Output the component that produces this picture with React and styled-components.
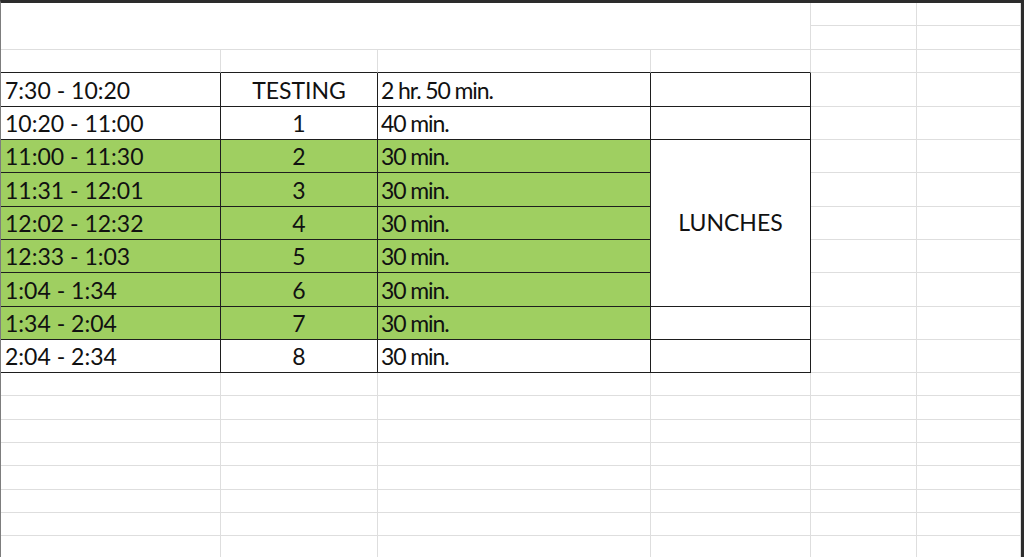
import React from "react";
import styled, { createGlobalStyle } from "styled-components";

const Global = createGlobalStyle`
  html, body { margin: 0; padding: 0; background: #ffffff; overflow: hidden; }
  body { font-family: Lato, "Open Sans", sans-serif; }
`;

const LIGHT = "#dedede";
const DARK = "#1e1e1e";
const GREEN = "#9fcf61";

const Sheet = styled.div`
  box-sizing: border-box;
  width: 1024px;
  height: 557px;
  overflow: hidden;
  border-top: 3px solid #2c2c2c;
  border-left: 1px solid #7d7d7d;
  border-right: 3px solid #2c2c2c;
  display: grid;
  grid-template-columns: 220px 157px 273px 160px 106px 104px;
  grid-template-rows: 23px 24px 23px 34px 33px 33px 34px 33px 33px 34px 33px 33px repeat(10, 23.33px);
  font-family: Lato, "Open Sans", sans-serif;
  font-size: 23px;
  color: #111;
`;

const Cell = styled.div`
  box-sizing: border-box;
  min-width: 0;
  overflow: hidden;
  white-space: nowrap;
  grid-column: span ${(p) => p.$cols || 1};
  grid-row: span ${(p) => p.$rows || 1};
  background: ${(p) => (p.$green ? GREEN : "#ffffff")};
  border-right: 1px solid ${(p) => (p.$r ? DARK : LIGHT)};
  border-bottom: 1px solid ${(p) => (p.$b ? DARK : LIGHT)};
  display: flex;
  align-items: ${(p) => (p.$middle ? "center" : "flex-end")};
  justify-content: ${(p) => (p.$center ? "center" : "flex-start")};
  padding: 0 4px 2px ${(p) => (p.$tight ? "3px" : "4px")};
  letter-spacing: ${(p) => (p.$tight ? "-1.1px" : "0")};
`;

const rows = [
  { time: "7:30 - 10:20", label: "TESTING", dur: "2 hr. 50 min.", green: false, d: "empty" },
  { time: "10:20 - 11:00", label: "1", dur: "40 min.", green: false, d: "empty" },
  { time: "11:00 - 11:30", label: "2", dur: "30 min.", green: true, d: "lunch" },
  { time: "11:31 - 12:01", label: "3", dur: "30 min.", green: true, d: "none" },
  { time: "12:02 - 12:32", label: "4", dur: "30 min.", green: true, d: "none" },
  { time: "12:33 - 1:03", label: "5", dur: "30 min.", green: true, d: "none" },
  { time: "1:04 - 1:34", label: "6", dur: "30 min.", green: true, d: "none" },
  { time: "1:34 - 2:04", label: "7", dur: "30 min.", green: true, d: "empty" },
  { time: "2:04 - 2:34", label: "8", dur: "30 min.", green: false, d: "empty" },
];

export default function App() {
  const blanks = Array.from({ length: 10 });
  return (
    <>
      <Global />
      <Sheet>
        {/* title area rows 1-2 merged A-D */}
        <Cell $cols={4} $rows={2} />
        <Cell />
        <Cell />
        <Cell />
        <Cell />
        {/* row 3 */}
        <Cell $b />
        <Cell $b />
        <Cell $b />
        <Cell $b />
        <Cell />
        <Cell />
        {rows.map((r, i) => (
          <React.Fragment key={i}>
            <Cell $green={r.green} $r $b>{r.time}</Cell>
            <Cell $green={r.green} $r $b $center>
              {r.label}
            </Cell>
            <Cell $green={r.green} $r $b $tight>{r.dur}</Cell>
            {r.d === "empty" && <Cell $r $b />}
            {r.d === "lunch" && (
              <Cell $rows={5} $r $b $center $middle>
                LUNCHES
              </Cell>
            )}
            <Cell />
            <Cell />
          </React.Fragment>
        ))}
        {blanks.map((_, i) => (
          <React.Fragment key={"b" + i}>
            <Cell />
            <Cell />
            <Cell />
            <Cell />
            <Cell />
            <Cell />
          </React.Fragment>
        ))}
      </Sheet>
    </>
  );
}
